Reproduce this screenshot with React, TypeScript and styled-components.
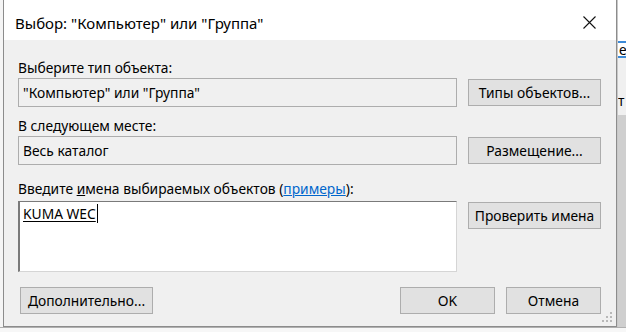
import styled, { createGlobalStyle } from "styled-components";

const GlobalStyle = createGlobalStyle`
  html, body {
    margin: 0;
    padding: 0;
    background: #f0f0f0;
  }
  body {
    font-family: "Noto Sans", "Open Sans", sans-serif;
    font-size: 13.8px;
    color: #000;
  }
`;

const Desktop = styled.div`
  width: 626px;
  height: 332px;
  overflow: hidden;
  display: grid;
  grid-template-columns: 3px 614px 9px;
  grid-template-rows: 327px 5px;
  background: #f0f0f0;
`;

const LeftGap = styled.div`
  background: #f5f5f5;
`;

const Window = styled.div`
  position: relative;
  border: 1px solid #8c8c8c;
  border-top: none;
  background: #f0f0f0;
  display: flex;
  flex-direction: column;
  box-sizing: border-box;
`;

const TitleBar = styled.div`
  height: 40px;
  background: #fff;
  display: flex;
  align-items: center;
  justify-content: space-between;
  padding: 5px 0 0 11px;
  box-sizing: border-box;
  font-size: 15px;
`;

const CloseButton = styled.div`
  width: 46px;
  height: 35px;
  display: flex;
  align-items: center;
  justify-content: center;
  margin-right: 4px;
`;

const Body = styled.div`
  padding: 19px 0 0 14px;
  display: flex;
  flex-direction: column;
`;

const Label = styled.div<{ $mb?: number }>`
  height: 18px;
  line-height: 18px;
  margin-bottom: ${(p) => p.$mb ?? 1}px;
`;

const Row = styled.div<{ $gap?: number }>`
  display: grid;
  grid-template-columns: 439px 133px;
  column-gap: 11px;
  align-items: start;
  margin-bottom: ${(p) => p.$gap ?? 0}px;
`;

const ReadOnlyBox = styled.div`
  height: 29px;
  box-sizing: border-box;
  border: 1px solid #adadad;
  background: #f0f0f0;
  padding: 0 4px;
  display: flex;
  align-items: center;
`;

const NamesBox = styled.div`
  height: 71px;
  box-sizing: border-box;
  background: #fff;
  border: 1px solid #d5d5d5;
  border-top-color: #7a7a7a;
  border-left: 2px solid #7a7a7a;
  padding: 2px 3px;
`;

const Resolved = styled.span`
  text-decoration: underline;
  text-underline-offset: 2px;
  border-right: 1px solid #000;
  padding-right: 1px;
`;

const Button = styled.div<{ $w?: number }>`
  width: ${(p) => (p.$w ? `${p.$w}px` : "100%")};
  height: 27px;
  box-sizing: border-box;
  border: 1px solid #adadad;
  background: #e1e1e1;
  display: flex;
  align-items: center;
  justify-content: center;
  margin-top: 1px;
`;

const Link = styled.span`
  color: #0066cc;
  text-decoration: underline;
`;

const AccessKey = styled.span`
  text-decoration: underline;
`;

const Footer = styled.div`
  display: flex;
  align-items: center;
  margin-top: 14px;
  padding: 0 15px 0 2px;
`;

const Spacer = styled.div`
  flex: 1;
`;

const FooterButtons = styled.div`
  display: flex;
  gap: 11px;
`;

const Grip = styled.svg`
  position: absolute;
  right: 4px;
  bottom: 4px;
`;

const RightStrip = styled.div`
  display: flex;
  flex-direction: column;
  background: #f0f0f0;
  border-left: 1px solid #c8c8c8;
  overflow: hidden;
  font-size: 13.8px;
`;

const StripTop = styled.div`
  height: 41px;
  background: #fff;
`;

const StripTab = styled.div`
  height: 13px;
  border-top: 2px solid #3c8ad8;
  border-bottom: 2px solid #3c8ad8;
  background: #fff;
  line-height: 13px;
  padding-left: 1px;
`;

const StripMid = styled.div`
  height: 35px;
  background: #f0f0f0;
`;

const StripText = styled.div`
  height: 16px;
  line-height: 16px;
`;

const StripGray = styled.div`
  flex: 1;
  background: #cfcfcf;
  border-top: 6px solid #f0f0f0;
`;

const BottomStrip = styled.div`
  grid-column: 1 / 4;
  background: #f7f7f7;
  border-top: 1px solid #b0b0b0;
`;

export default function App() {
  return (
    <>
      <GlobalStyle />
      <Desktop>
        <LeftGap />
        <Window>
          <TitleBar>
            <span>Выбор: "Компьютер" или "Группа"</span>
            <CloseButton>
              <svg width="13" height="13" viewBox="0 0 13 13">
                <path d="M0.5 0.5 L12.5 12.5 M12.5 0.5 L0.5 12.5" stroke="#111" strokeWidth="1.1" />
              </svg>
            </CloseButton>
          </TitleBar>
          <Body>
            <Label>Выберите тип объекта:</Label>
            <Row $gap={10}>
              <ReadOnlyBox>"Компьютер" или "Группа"</ReadOnlyBox>
              <Button>Типы объектов...</Button>
            </Row>
            <Label>В следующем месте:</Label>
            <Row $gap={15}>
              <ReadOnlyBox>Весь каталог</ReadOnlyBox>
              <Button>Размещение...</Button>
            </Row>
            <Label $mb={3}>
              Введите <AccessKey>и</AccessKey>мена выбираемых объектов (<Link>примеры</Link>):
            </Label>
            <Row>
              <NamesBox>
                <Resolved>KUMA WEC</Resolved>
              </NamesBox>
              <Button>Проверить имена</Button>
            </Row>
            <Footer>
              <Button $w={133}>Дополнительно...</Button>
              <Spacer />
              <FooterButtons>
                <Button $w={95}>OK</Button>
                <Button $w={95}>Отмена</Button>
              </FooterButtons>
            </Footer>
          </Body>
          <Grip width="10" height="10" viewBox="0 0 10 10">
            <rect x="8" y="0" width="2" height="2" fill="#b8b8b8" />
            <rect x="4" y="4" width="2" height="2" fill="#b8b8b8" />
            <rect x="8" y="4" width="2" height="2" fill="#b8b8b8" />
            <rect x="0" y="8" width="2" height="2" fill="#b8b8b8" />
            <rect x="4" y="8" width="2" height="2" fill="#b8b8b8" />
            <rect x="8" y="8" width="2" height="2" fill="#b8b8b8" />
          </Grip>
        </Window>
        <RightStrip>
          <StripTop />
          <StripTab>е</StripTab>
          <StripMid />
          <StripText>т</StripText>
          <StripGray />
        </RightStrip>
        <BottomStrip />
      </Desktop>
    </>
  );
}
